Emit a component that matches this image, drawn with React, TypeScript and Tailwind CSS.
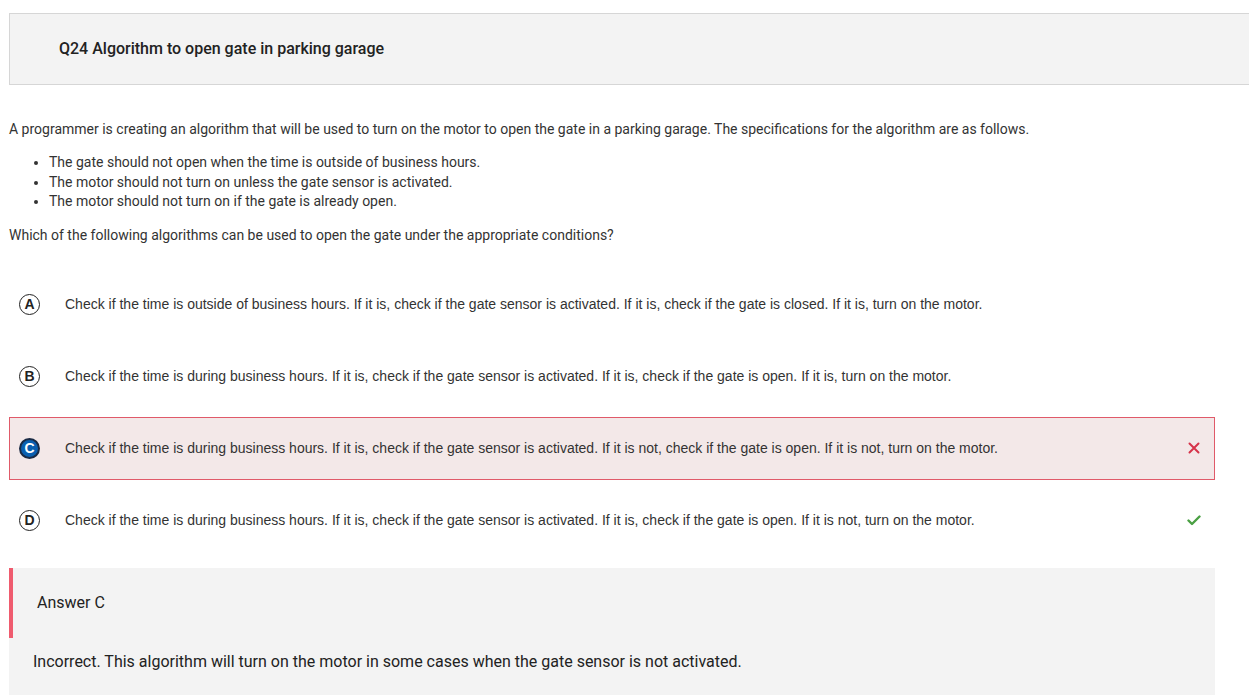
import React from 'react';

type Option = { letter: string; text: string; selected?: boolean; mark?: 'wrong' | 'right' };

const options: Option[] = [
  {
    letter: 'A',
    text: 'Check if the time is outside of business hours. If it is, check if the gate sensor is activated. If it is, check if the gate is closed. If it is, turn on the motor.',
  },
  {
    letter: 'B',
    text: 'Check if the time is during business hours. If it is, check if the gate sensor is activated. If it is, check if the gate is open. If it is, turn on the motor.',
  },
  {
    letter: 'C',
    text: 'Check if the time is during business hours. If it is, check if the gate sensor is activated. If it is not, check if the gate is open. If it is not, turn on the motor.',
    selected: true,
    mark: 'wrong',
  },
  {
    letter: 'D',
    text: 'Check if the time is during business hours. If it is, check if the gate sensor is activated. If it is, check if the gate is open. If it is not, turn on the motor.',
    mark: 'right',
  },
];

const LetterBadge = ({ letter, selected }: { letter: string; selected?: boolean }) => (
  <div
    className={`w-[21px] h-[21px] rounded-full flex items-center justify-center text-[14px] font-bold leading-none ${
      selected ? 'bg-[#0a5fb0] border-2 border-[#1a2a44] text-white' : 'bg-white border-[1.5px] border-[#222] text-[#222]'
    }`}
    style={{ fontFamily: '"Liberation Sans", Arial, sans-serif' }}
  >
    {letter}
  </div>
);

const WrongIcon = () => (
  <svg width="12" height="12" viewBox="0 0 12 12">
    <path d="M1.5 1.5 L10.5 10.5 M10.5 1.5 L1.5 10.5" stroke="#d6334a" strokeWidth="2" strokeLinecap="round" />
  </svg>
);

const RightIcon = () => (
  <svg width="14" height="11" viewBox="0 0 14 11">
    <path d="M1.5 5.5 L5 9 L12.5 1.5" stroke="#4aa043" strokeWidth="2.4" fill="none" strokeLinecap="round" strokeLinejoin="round" />
  </svg>
);

export default function App() {
  return (
    <div className="w-[1249px] h-[695px] overflow-hidden bg-white text-[#333]" style={{ fontFamily: 'Roboto, "Liberation Sans", sans-serif' }}>
      <div className="pt-[13px] pl-[9px]">
        <div className="h-[72px] w-[1260px] bg-[#f3f3f3] border border-[#d6d6d6] flex items-center pl-[49px]">
          <h1 className="text-[16px] font-medium text-[#222]">Q24 Algorithm to open gate in parking garage</h1>
        </div>
      </div>

      <div className="pl-[9px] mt-[34px] text-[14px] leading-[20px] text-[#333]">
        <p>
          A programmer is creating an algorithm that will be used to turn on the motor to open the gate in a parking garage. The specifications for
          the algorithm are as follows.
        </p>
        <ul className="list-disc pl-[40px] mt-[14px] leading-[19.5px]">
          <li>The gate should not open when the time is outside of business hours.</li>
          <li>The motor should not turn on unless the gate sensor is activated.</li>
          <li>The motor should not turn on if the gate is already open.</li>
        </ul>
        <p className="mt-[13px]">Which of the following algorithms can be used to open the gate under the appropriate conditions?</p>
      </div>

      <div className="pl-[9px] w-[1215px] mt-[28px] flex flex-col gap-[9px]">
        {options.map((o) => (
          <div
            key={o.letter}
            className={`h-[63px] flex items-center pl-[9px] pr-[13px] border ${
              o.selected ? 'bg-[#f3e8e8] border-[#e05a69]' : 'border-transparent'
            }`}
          >
            <LetterBadge letter={o.letter} selected={o.selected} />
            <span
              className="ml-[25px] flex-1 text-[14px] text-[#333]"
              style={{ fontFamily: '"Liberation Sans", Arial, sans-serif' }}
            >
              {o.text}
            </span>
            <div className="w-[14px] flex justify-center">
              {o.mark === 'wrong' && <WrongIcon />}
              {o.mark === 'right' && <RightIcon />}
            </div>
          </div>
        ))}
      </div>

      <div className="ml-[9px] w-[1206px] mt-[16px] bg-[#f3f3f3] h-[140px]">
        <div className="h-[70px] border-l-4 border-[#ef5b6e] flex items-center pl-[24px]">
          <span className="text-[16px] text-[#222]">Answer C</span>
        </div>
        <p className="pl-[24px] mt-[12px] text-[16px] text-[#222]">
          Incorrect. This algorithm will turn on the motor in some cases when the gate sensor is not activated.
        </p>
      </div>
    </div>
  );
}
